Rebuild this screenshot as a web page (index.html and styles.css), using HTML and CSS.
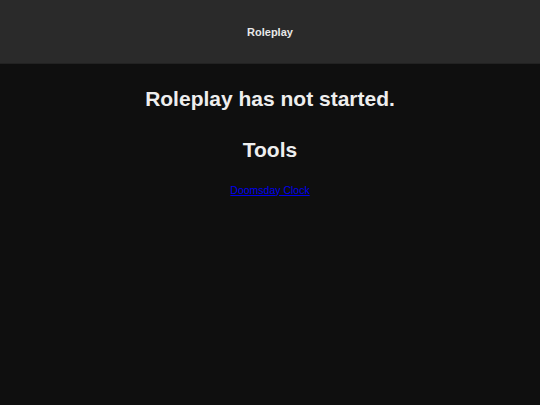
FILE: index.html
```html
<!DOCTYPE html>
<html>
<head>
<meta charset="utf-8">
<link rel="stylesheet" href="styles.css">
</head>
<body>
<header class="topbar"><span class="topbar-title">Roleplay</span></header>
<main class="content">
  <h1 class="status">Roleplay has not started.</h1>
  <h2 class="tools-title">Tools</h2>
  <a class="tool-link" href="#">Doomsday Clock</a>
</main>
</body>
</html>
```
FILE: styles.css
```css
html, body {
  margin: 0;
  padding: 0;
  background: #0f0f0f;
  font-family: "Liberation Sans", Arial, sans-serif;
  color: #eeeeee;
  height: 100%;
}
.topbar {
  height: 64px;
  background: #2a2a2a;
  border-bottom: 1px solid #222222;
  display: flex;
  align-items: center;
  justify-content: center;
  box-sizing: border-box;
}
.topbar-title {
  font-size: 11px;
  font-weight: bold;
  color: #e8e8e8;
}
.content {
  display: flex;
  flex-direction: column;
  align-items: center;
  padding-top: 22px;
}
.status {
  margin: 0;
  font-size: 21px;
  font-weight: bold;
  line-height: 26px;
}
.tools-title {
  margin: 25px 0 0 0;
  font-size: 21px;
  font-weight: bold;
  line-height: 26px;
}
.tool-link {
  margin-top: 21px;
  font-size: 10.5px;
  color: #0000ee;
}
```
